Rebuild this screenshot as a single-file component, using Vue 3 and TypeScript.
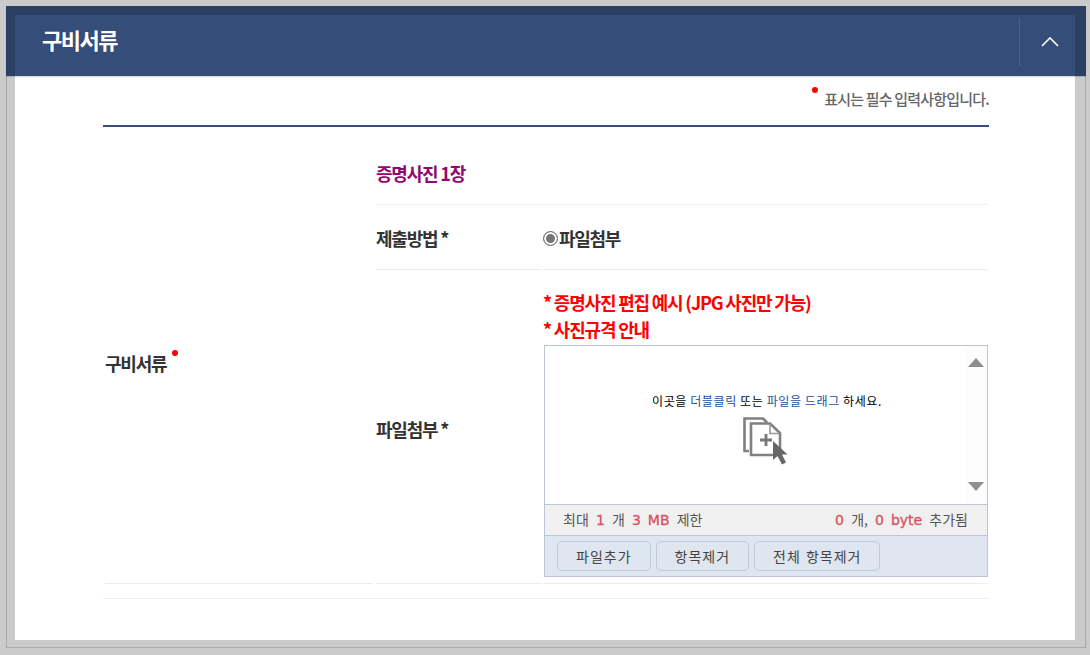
<script setup lang="ts">
const limits = { count: 1, size: 3 };
const added = { count: 0, bytes: 0 };
const buttons: string[] = ['파일추가', '항목제거', '전체 항목제거'];
</script>

<template>
  <div class="page">
    <div class="frame">
      <header class="head">
        <h2 class="title">구비서류</h2>
        <button class="toggle" type="button" aria-label="접기">
          <svg width="18" height="11" viewBox="0 0 18 11"><path d="M1 10 L9 2 L17 10" fill="none" stroke="#fff" stroke-width="1.6" /></svg>
        </button>
      </header>
      <div class="body">
        <p class="note"><i class="dot"></i>표시는 필수 입력사항입니다.</p>
        <div class="table">
          <div class="side">구비서류<i class="dot side-dot"></i></div>
          <div class="main">
            <div class="row intro"><strong class="purple">증명사진 1장</strong></div>
            <div class="row method">
              <div class="label">제출방법 *</div>
              <div class="value radio"><i class="radio-mark"></i>파일첨부</div>
            </div>
            <div class="row attach">
              <div class="label">파일첨부 *</div>
              <div class="value">
                <p class="red">* 증명사진 편집 예시 (JPG 사진만 가능)</p>
                <p class="red">* 사진규격 안내</p>
                <div class="uploader">
                  <div class="drop">
                    <div class="drop-inner">
                      <p class="hint">이곳을 <em>더블클릭</em> 또는 <em>파일을 드래그</em> 하세요.</p>
                      <svg class="drop-icon" width="46" height="48" viewBox="0 0 46 48">
                        <path d="M6 34H1.500V1.500H20L24 5.500" fill="none" stroke="#808080" stroke-width="2.6" />
                        <path d="M8 6.500H27L37 16V38H8Z" fill="#fff" stroke="#808080" stroke-width="2.6" />
                        <path d="M27 7V16.500H36.500" fill="none" stroke="#999" stroke-width="1.600" />
                        <path d="M17 23H29M23 17V29" fill="none" stroke="#777" stroke-width="2.800" />
                        <path d="M30 24V43L34.500 39L39 47.500L43 45.500L39 37.500H44.500Z" fill="#666" />
                      </svg>
                    </div>
                    <div class="scroller">
                      <i class="arrow up"></i>
                      <i class="arrow down"></i>
                    </div>
                  </div>
                  <div class="status">
                    <span>최대 <b>{{ limits.count }}</b> 개 <b>{{ limits.size }} MB</b> 제한</span>
                    <span><b>{{ added.count }}</b> 개, <b>{{ added.bytes }} byte</b> 추가됨</span>
                  </div>
                  <div class="actions">
                    <button v-for="b in buttons" :key="b" class="btn" type="button">{{ b }}</button>
                  </div>
                </div>
              </div>
            </div>
          </div>
        </div>
        <div class="end-line"></div>
      </div>
    </div>
  </div>
</template>

<style>
html, body { margin: 0; background: #cbcbcb; }
</style>

<style scoped>
* { box-sizing: border-box; }
.page {
  width: 1090px; height: 655px; padding: 6px 4px 6px 6px;
  background: #cbcbcb; overflow: hidden;
  font-family: "Noto Sans CJK KR", "Noto Sans", sans-serif;
}
.frame {
  position: relative;
  width: 1080px; height: 642px; padding: 9px 10px 7px 8px;
  border-left: 1px solid #aaa; border-bottom: 1px solid #aaa; border-right: 1px solid #aaa;
}
.head {
  position: absolute; left: -1px; right: -1px; top: 0; height: 70px;
  background: #344d79;
  border: solid #2c4063; border-width: 9px 11px 0 9px;
  box-shadow: 0 1px 1px rgba(0,0,0,.15);
  display: flex; align-items: center; justify-content: space-between;
  z-index: 1;
}
.title {
  margin: 0 0 13px 27px; color: #fff; font-size: 22px; font-weight: 700; letter-spacing: -1.500px; line-height: 52px;
}
.toggle {
  width: 56px; height: 48px; margin: 0 0 7px; padding: 0 0 1px 4px; background: none;
  border: 0; border-left: 1px solid #4b6186;
  display: flex; align-items: center; justify-content: center;
}
.body { background: #fff; height: 625px; padding: 61px 86px 0 88px; }
.note {
  margin: 0; height: 51px; padding-top: 11px; text-align: right; color: #666;
  font-size: 15px; line-height: 20px; letter-spacing: -.8px; font-weight: 500;
  border-bottom: 2px solid #344d79;
}
.dot { display: inline-block; width: 6px; height: 6px; border-radius: 50%; background: #f00; vertical-align: 12px; margin-right: 6px; }
.table { display: flex; height: 457px; }
.side {
  width: 268px; margin-left: 2px; height: 457px; display: flex; align-items: center; padding-top: 16px;
  border-bottom: 1px solid #ececec; color: #333; font-size: 18px; font-weight: 700; letter-spacing: -1.200px;
}
.side-dot { margin: 0 0 20px 6px; flex: none; }
.main { width: 611px; margin-left: 3px; }
.row { display: flex; }
.intro { height: 78px; align-items: center; padding-top: 14px; border-bottom: 1px solid #ececec; }
.purple { font-size: 18px; font-weight: 700; color: #8e0a6e; letter-spacing: -1.200px; }
.method { height: 65px; }
.attach { height: 314px; }
.label {
  width: 165px; flex: none; display: flex; align-items: center;
  border-bottom: 1px solid #ececec;
  color: #333; font-size: 18px; font-weight: 700; letter-spacing: -1.200px;
}
.method .label { padding-top: 2px; }
.attach .label { padding-top: 4px; }
.value { flex: 1; min-width: 0; margin-left: 2px; border-bottom: 1px solid #ececec; }
.radio { color: #333; font-size: 18px; font-weight: 700; letter-spacing: -1.300px; display: flex; align-items: center; padding-top: 2px; }
.radio-mark {
  width: 15px; height: 15px; border: 1px solid #767676; border-radius: 50%;
  background: #757575; box-shadow: inset 0 0 0 2px #fff; margin-right: 1px;
}
.attach .value { padding-top: 19px; }
.red { margin: 0; color: #f00; font-size: 18px; font-weight: 700; letter-spacing: -1.200px; line-height: 27px; }
.uploader { width: 444px; margin: 2px 0 0 1px; border: 1px solid #bcc5d3; }
.drop { height: 158px; display: flex; background: #fff; }
.drop-inner { flex: 1; padding: 45px 0 0 107px; }
.hint { margin: 0; font-size: 12px; line-height: 20px; color: #000; letter-spacing: .6px; white-space: nowrap; }
.hint em { font-style: normal; color: #17519f; }
.drop-icon { display: block; margin: 6px 0 0 91px; }
.scroller { width: 22px; background: #fcfcfc; display: flex; flex-direction: column; justify-content: space-between; align-items: center; padding: 12px 0 13px; }
.arrow { width: 0; height: 0; border-left: 8px solid transparent; border-right: 8px solid transparent; }
.up { border-bottom: 9px solid #8e8e8e; }
.down { border-top: 9px solid #8e8e8e; }
.status {
  height: 32px; padding: 0 19px 3px 18px; background: #f0f0f0;
  border-top: 1px solid #bcc5d3; border-bottom: 1px solid #bcc5d3;
  display: flex; justify-content: space-between; align-items: center;
  color: #555; font-size: 14px; letter-spacing: 0; word-spacing: 4px;
}
.status b { font-family: "DejaVu Sans", sans-serif; font-size: 14px; color: #d8505f; font-weight: 400; -webkit-text-stroke: .3px #d8505f; letter-spacing: 0; word-spacing: 2.500px; }
.actions { height: 40px; background: #dfe6f0; padding: 5px 12px; display: flex; gap: 5px; }
.btn {
  height: 30px; padding: 0 18px; border: 1px solid #bfccdc; border-radius: 5px; background: #dfe6f0;
  color: #444; font: 14px "Noto Sans CJK KR", sans-serif; letter-spacing: 1px; word-spacing: 1px;
}
.end-line { height: 1px; margin-top: 14px; background: #ececec; }
</style>
